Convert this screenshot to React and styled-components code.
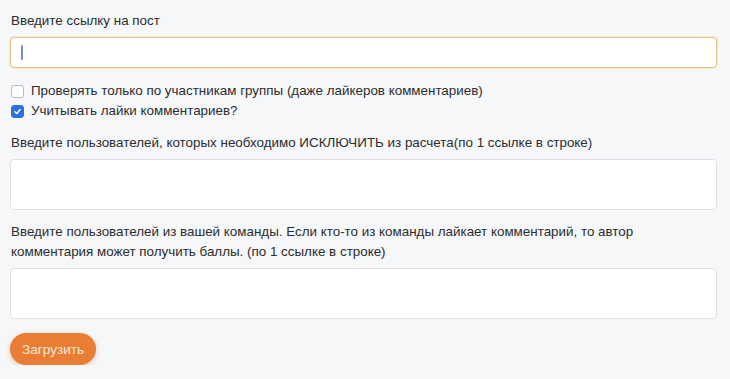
import React from "react";
import styled, { createGlobalStyle } from "styled-components";

const GlobalStyle = createGlobalStyle`
  html, body {
    margin: 0;
    padding: 0;
    background: #f6f7f9;
  }
  body {
    font-family: "Liberation Sans", Arial, sans-serif;
    color: #2b2d30;
  }
`;

const Form = styled.form`
  display: flex;
  flex-direction: column;
  padding: 11px 13px 0 10px;
  box-sizing: border-box;
  width: 730px;
`;

const Label = styled.label`
  display: block;
  font-size: 13.4px;
  line-height: 20px;
  margin: 0 0 6px 1px;
`;

const TextInput = styled.input`
  box-sizing: border-box;
  width: 100%;
  height: 31px;
  border-radius: 4px;
  border: 1px solid ${(p) => (p.focused ? "#e2c784" : "#dfe1e5")};
  box-shadow: ${(p) => (p.focused ? "0 0 0 1px rgba(240, 200, 110, 0.35)" : "none")};
  background: #fff;
  padding: 0 10px;
  font-size: 14px;
  outline: none;
`;

const Caret = styled.span`
  position: absolute;
  left: 11px;
  top: 8px;
  width: 2px;
  height: 15px;
  background: #7d88c9;
  border-radius: 1px;
`;

const InputWrap = styled.div`
  position: relative;
  margin-bottom: 13px;
`;

const Area = styled.textarea`
  box-sizing: border-box;
  width: 100%;
  height: 51px;
  border-radius: 4px;
  border: 1px solid #dfe1e5;
  background: #fff;
  resize: none;
  outline: none;
  margin: 0 0 ${(p) => p.gap}px;
  display: block;
`;

const CheckRow = styled.label`
  display: flex;
  align-items: center;
  gap: 7px;
  font-size: 13.4px;
  line-height: 20px;
  margin-left: 1px;
`;

const Box = styled.span`
  box-sizing: border-box;
  width: 13px;
  height: 13px;
  border-radius: 3px;
  border: 1px solid ${(p) => (p.checked ? "#2f6fde" : "#b9bcc2")};
  background: ${(p) => (p.checked ? "#2f6fde" : "#fff")};
  display: flex;
  align-items: center;
  justify-content: center;
`;

const Checks = styled.div`
  display: flex;
  flex-direction: column;
  margin-bottom: 12px;
`;

const Button = styled.button`
  align-self: flex-start;
  height: 32px;
  padding: 0 12px;
  border: none;
  border-radius: 16px;
  background: #e97d33;
  color: #fbe9dc;
  font-family: "Liberation Sans", Arial, sans-serif;
  font-size: 13.6px;
  box-shadow: 0 2px 5px rgba(200, 110, 40, 0.35);
  margin-top: 2px;
`;

const Check = ({ checked, children }) => (
  <CheckRow>
    <Box checked={checked}>
      {checked && (
        <svg width="9" height="9" viewBox="0 0 10 10">
          <path d="M2 5.2 L4.2 7.3 L8 2.8" fill="none" stroke="#fff" strokeWidth="1.6" strokeLinecap="round" strokeLinejoin="round" />
        </svg>
      )}
    </Box>
    {children}
  </CheckRow>
);

export default function App() {
  return (
    <>
      <GlobalStyle />
      <Form onSubmit={(e) => e.preventDefault()}>
        <Label>Введите ссылку на пост</Label>
        <InputWrap>
          <TextInput focused readOnly />
          <Caret />
        </InputWrap>
        <Checks>
          <Check>Проверять только по участникам группы (даже лайкеров комментариев)</Check>
          <Check checked>Учитывать лайки комментариев?</Check>
        </Checks>
        <Label>Введите пользователей, которых необходимо ИСКЛЮЧИТЬ из расчета(по 1 ссылке в строке)</Label>
        <Area gap={12} />
        <Label>
          Введите пользователей из вашей команды. Если кто-то из команды лайкает комментарий, то автор
          комментария может получить баллы. (по 1 ссылке в строке)
        </Label>
        <Area gap={12} />
        <Button>Загрузить</Button>
      </Form>
    </>
  );
}
